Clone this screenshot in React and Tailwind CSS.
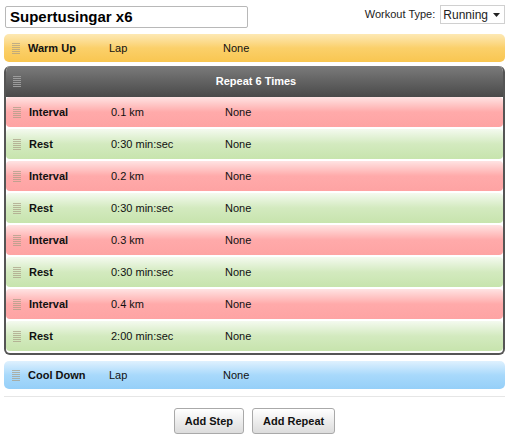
const steps = [
    { type: 'interval', label: 'Interval', value: '0.1 km' },
    { type: 'rest', label: 'Rest', value: '0:30 min:sec' },
    { type: 'interval', label: 'Interval', value: '0.2 km' },
    { type: 'rest', label: 'Rest', value: '0:30 min:sec' },
    { type: 'interval', label: 'Interval', value: '0.3 km' },
    { type: 'rest', label: 'Rest', value: '0:30 min:sec' },
    { type: 'interval', label: 'Interval', value: '0.4 km' },
    { type: 'rest', label: 'Rest', value: '2:00 min:sec' },
];

const styles = {
    warmup: 'bg-gradient-to-b from-[#fde9b4] via-[#fbd06a] to-[#f9c650]',
    cooldown: 'bg-gradient-to-b from-[#dff1fe] via-[#a8d9fb] to-[#95cff8]',
    interval: 'bg-gradient-to-b from-[#ffe3e3] via-[#ffaaaa] to-[#fea3a3]',
    rest: 'bg-gradient-to-b from-[#f4faef] via-[#d3eabf] to-[#c7e4ad]',
};

function Grip({ color = 'bg-[#a89c84]/70' }) {
    return (
        <div className="flex flex-col gap-[1px] w-[8px]">
            {[0, 1, 2, 3, 4, 5].map((i) => (
                <div key={i} className={`h-[1px] w-full ${color}`} />
            ))}
        </div>
    );
}

function StepRow({ type, label, value, height = 'h-[28px]', rounded = 'rounded-[5px]', inset = false }) {
    return (
        <div className={`flex items-center ${height} ${rounded} ${styles[type]} text-[11px] text-[#111]`}>
            <div className={`${inset ? 'pl-[7px]' : 'pl-[8px]'} pr-[8px]`}>
                <Grip />
            </div>
            <div className={`${inset ? 'w-[82px]' : 'w-[81px]'} font-bold`}>{label}</div>
            <div className="w-[114px]">{value}</div>
            <div>None</div>
        </div>
    );
}

export default function App() {
    return (
        <div className="w-[512px] h-[439px] bg-white font-['Liberation_Sans',Arial,sans-serif] px-[4px] pt-[6px]">
            {/* Header */}
            <div className="flex items-start justify-between">
                <div className="ml-[1px] w-[243px] h-[22px] border border-[#b8b8b8] rounded-[2px] flex items-center px-[4px] text-[15px] font-bold text-black">
                    Supertusingar x6
                </div>
                <div className="flex items-center gap-[5px] text-[11px] text-[#222] mr-[3px] mt-[-1px]">
                    <span>Workout Type:</span>
                    <div className="h-[19px] border border-[#d0d0d0] flex items-center pl-[2px] pr-[4px] gap-[5px] text-[12px]">
                        <span>Running</span>
                        <svg width="7" height="4" viewBox="0 0 7 4"><path d="M0 0h7L3.5 4z" fill="#222" /></svg>
                    </div>
                </div>
            </div>

            <div className="mt-[6px] w-[501px]">
                <StepRow type="warmup" label="Warm Up" value="Lap" />
            </div>

            {/* Repeat block */}
            <div className="mt-[4px] w-[501px] border-2 border-[#555] border-t-0 rounded-[6px] overflow-hidden bg-white">
                <div className="h-[31px] bg-gradient-to-b from-[#7b7b7b] to-[#4a4a4a] flex items-center text-white text-[11px] font-bold">
                    <div className="pl-[7px]">
                        <Grip color="bg-[#9c9c9c]" />
                    </div>
                    <div className="flex-1 text-center pr-[12px]">Repeat 6 Times</div>
                </div>
                <div className="flex flex-col gap-[2px] pb-[2px]">
                    {steps.map((s, i) => (
                        <StepRow key={i} {...s} height="h-[30px]" rounded="rounded-[4px]" inset />
                    ))}
                </div>
            </div>

            <div className="mt-[6px] w-[501px]">
                <StepRow type="cooldown" label="Cool Down" value="Lap" />
            </div>

            <div className="mt-[7px] w-[501px] h-[1px] bg-[#e6e6e6]" />

            <div className="flex justify-center gap-[8px] mt-[11px] pr-[3px]">
                <button className="h-[26px] px-[10px] border border-[#a9a9a9] rounded-[3px] bg-gradient-to-b from-white to-[#dcdcdc] text-[11px] font-bold text-[#111]">
                    Add Step
                </button>
                <button className="h-[26px] px-[10px] border border-[#a9a9a9] rounded-[3px] bg-gradient-to-b from-white to-[#dcdcdc] text-[11px] font-bold text-[#111]">
                    Add Repeat
                </button>
            </div>
        </div>
    );
}
